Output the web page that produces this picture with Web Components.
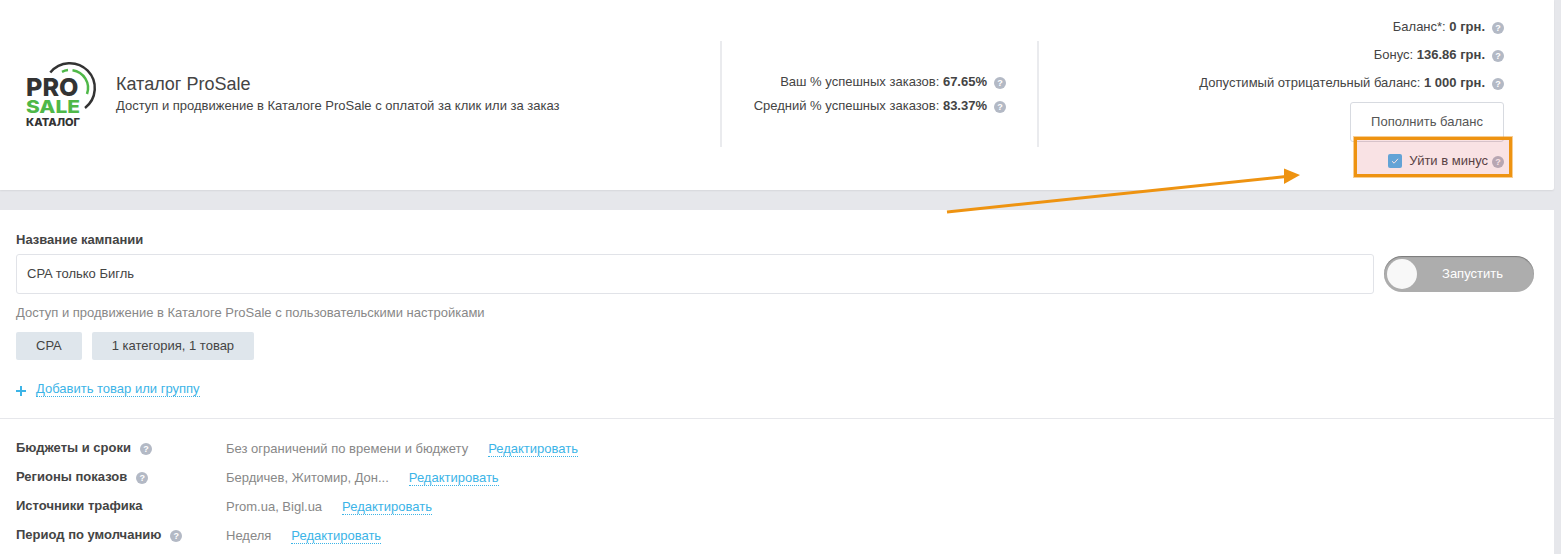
<!DOCTYPE html>
<html lang="ru">
<head>
<meta charset="utf-8">
<title>Каталог ProSale</title>
<style>
    html, body { margin: 0; height: 554px; overflow: hidden; background: #e6e7eb; }
    body { font: 13px/16px "Liberation Sans", Arial, sans-serif; color: #444; }
</style>
</head>
<body>
<campaign-page></campaign-page>

<script>
class HelpIcon extends HTMLElement {
    constructor() {
        super();
        this.attachShadow({ mode: 'open' });
        this.shadowRoot.innerHTML = `
            <style>
                :host {
                    display: inline-flex;
                    align-items: center;
                    justify-content: center;
                    width: 12px;
                    height: 12px;
                    border-radius: 50%;
                    background: #b3b9c5;
                    color: #fff;
                    font: bold 9px/12px "Liberation Sans", Arial, sans-serif;
                    flex: none;
                }
            </style>?`;
    }
}
customElements.define('help-icon', HelpIcon);

class StatLine extends HTMLElement {
    constructor() {
        super();
        this.attachShadow({ mode: 'open' });
        this.shadowRoot.innerHTML = `
            <style>
                :host {
                    display: flex;
                    justify-content: flex-end;
                    align-items: center;
                    gap: 7px;
                    height: 28px;
                    white-space: nowrap;
                }
                help-icon { position: relative; top: 1px; }
            </style>
            <span><slot></slot></span>
            <help-icon></help-icon>`;
    }
}
customElements.define('stat-line', StatLine);

class ProLogo extends HTMLElement {
    constructor() {
        super();
        this.attachShadow({ mode: 'open' });
        this.shadowRoot.innerHTML = `
            <style>
                :host { display: block; width: 74px; height: 66px; flex: none; }
                svg { display: block; overflow: visible; }
                text { font-family: Inter, "Liberation Sans", sans-serif; font-weight: 800; }
            </style>
            <svg width="74" height="66" viewBox="0 -1 74 66">
                <path d="M24.300 11.500A25 25 0 1 1 59 47" fill="none" stroke="#333" stroke-width="2.500"/>
                <path d="M36 10.900A18 18 0 0 1 42 9.100" fill="none" stroke="#4fb848" stroke-width="2.500"/>
                <path d="M46.500 9.200A18 18 0 0 1 61 33" fill="none" stroke="#4fb848" stroke-width="2.500"/>
                <text x="0" y="34.500" font-size="25" fill="#333" textLength="52.500" lengthAdjust="spacingAndGlyphs">PRO</text>
                <text x="0" y="51.500" font-size="17.500" fill="#4fb848" textLength="54" lengthAdjust="spacingAndGlyphs">SALE</text>
                <text x="0" y="65" font-size="11" fill="#333" textLength="54" lengthAdjust="spacingAndGlyphs">КАТАЛОГ</text>
            </svg>`;
    }
}
customElements.define('pro-logo', ProLogo);

class BalanceButton extends HTMLElement {
    constructor() {
        super();
        this.attachShadow({ mode: 'open' });
        this.shadowRoot.innerHTML = `
            <style>
                :host {
                    display: flex;
                    align-items: center;
                    justify-content: center;
                    box-sizing: border-box;
                    width: 154px;
                    height: 40px;
                    border: 1px solid #d7dae0;
                    border-radius: 3px;
                    background: #fff;
                    color: #555;
                }
            </style><slot></slot>`;
    }
}
customElements.define('balance-button', BalanceButton);

class MinusCheck extends HTMLElement {
    constructor() {
        super();
        this.attachShadow({ mode: 'open' });
        this.shadowRoot.innerHTML = `
            <style>
                :host {
                    display: flex;
                    justify-content: flex-end;
                    align-items: center;
                    height: 38px;
                    white-space: nowrap;
                }
                .box {
                    display: flex;
                    align-items: center;
                    justify-content: center;
                    width: 14px;
                    height: 14px;
                    border-radius: 2px;
                    background: #4fb6ef;
                    margin-right: 7px;
                }
                help-icon { margin-left: 4px; position: relative; top: 1px; }
            </style>
            <span class="box">
                <svg width="8" height="8" viewBox="0 0 8 8"><path d="M1 4.200L3.100 6.200L7 1.800" fill="none" stroke="#fff" stroke-width="1"/></svg>
            </span>
            <span><slot></slot></span>
            <help-icon></help-icon>`;
    }
}
customElements.define('minus-check', MinusCheck);

class SummaryCard extends HTMLElement {
    constructor() {
        super();
        this.attachShadow({ mode: 'open' });
        this.shadowRoot.innerHTML = `
            <style>
                :host {
                    display: flex;
                    align-items: flex-start;
                    box-sizing: border-box;
                    height: 190px;
                    background: #fff;
                    box-shadow: 0 1px 2px rgba(0, 0, 0, .07);
                    border-bottom-right-radius: 2px;
                }
                .brand {
                    box-sizing: border-box;
                    width: 720px;
                    display: flex;
                    align-items: center;
                    height: 66px;
                    margin-top: 60px;
                    padding-left: 26px;
                }
                .brand-text { margin-left: 16px; }
                h1 {
                    margin: 0 0 3px;
                    font-size: 18px;
                    line-height: 22px;
                    font-weight: normal;
                    color: #444;
                }
                .stats {
                    box-sizing: border-box;
                    width: 319px;
                    height: 106px;
                    margin-top: 41px;
                    border-left: 2px solid #eaebee;
                    border-right: 2px solid #eaebee;
                    padding: 29px 31px 0 0;
                }
                .stats stat-line { height: 24px; }
                .balance {
                    width: 465px;
                    padding-top: 13px;
                }
                .actions { width: 154px; margin: 5px 0 0 auto; }
                b { font-weight: bold; }
            </style>
            <div class="brand">
                <pro-logo></pro-logo>
                <div class="brand-text">
                    <h1>Каталог ProSale</h1>
                    <div>Доступ и продвижение в Каталоге ProSale с оплатой за клик или за заказ</div>
                </div>
            </div>
            <div class="stats">
                <stat-line>Ваш % успешных заказов: <b>67.65%</b></stat-line>
                <stat-line>Средний % успешных заказов: <b>83.37%</b></stat-line>
            </div>
            <div class="balance">
                <stat-line>Баланс*: <b>0 грн.</b></stat-line>
                <stat-line>Бонус: <b>136.86 грн.</b></stat-line>
                <stat-line>Допустимый отрицательный баланс: <b>1 000 грн.</b></stat-line>
                <div class="actions">
                    <balance-button>Пополнить баланс</balance-button>
                    <minus-check>Уйти в минус</minus-check>
                </div>
            </div>`;
    }
}
customElements.define('summary-card', SummaryCard);

class RunToggle extends HTMLElement {
    constructor() {
        super();
        this.attachShadow({ mode: 'open' });
        this.shadowRoot.innerHTML = `
            <style>
                :host {
                    display: flex;
                    align-items: center;
                    box-sizing: border-box;
                    width: 150px;
                    height: 36px;
                    padding: 0 3px;
                    border-radius: 18px;
                    background: #adadad;
                    box-shadow: inset 0 1px 1px rgba(0, 0, 0, .3);
                    color: #fff;
                    flex: none;
                }
                .knob {
                    width: 30px;
                    height: 30px;
                    border-radius: 50%;
                    background: #f8f8f8;
                    flex: none;
                }
                .label { flex: 1; text-align: center; padding-right: 3px; }
            </style>
            <span class="knob"></span>
            <span class="label"><slot></slot></span>`;
    }
}
customElements.define('run-toggle', RunToggle);

class TagChip extends HTMLElement {
    constructor() {
        super();
        this.attachShadow({ mode: 'open' });
        this.shadowRoot.innerHTML = `
            <style>
                :host {
                    display: flex;
                    align-items: center;
                    height: 28px;
                    padding: 0 20px;
                    border-radius: 2px;
                    background: #dfe6ec;
                    color: #444;
                }
            </style><slot></slot>`;
    }
}
customElements.define('tag-chip', TagChip);

class DotLink extends HTMLElement {
    constructor() {
        super();
        this.attachShadow({ mode: 'open' });
        this.shadowRoot.innerHTML = `
            <style>
                :host {
                    display: inline-block;
                    color: #3cb4e7;
                    line-height: 15px;
                    border-bottom: 1px dotted #3cb4e7;
                    white-space: nowrap;
                }
            </style><slot></slot>`;
    }
}
customElements.define('dot-link', DotLink);

class SettingRow extends HTMLElement {
    constructor() {
        super();
        this.attachShadow({ mode: 'open' });
        const help = this.hasAttribute('help') ? '<help-icon></help-icon>' : '';
        this.shadowRoot.innerHTML = `
            <style>
                :host {
                    display: flex;
                    align-items: center;
                    height: 29px;
                    white-space: nowrap;
                }
                .name {
                    display: flex;
                    align-items: center;
                    gap: 9px;
                    width: 210px;
                    font-weight: bold;
                    color: #444;
                    position: relative;
                    top: -1px;
                }
                .name help-icon { position: relative; top: 1px; }
                .value { color: #888; margin-right: 20px; }
            </style>
            <div class="name"><span>${this.getAttribute('name')}</span>${help}</div>
            <span class="value"><slot></slot></span>
            <dot-link>Редактировать</dot-link>`;
    }
}
customElements.define('setting-row', SettingRow);

class CampaignForm extends HTMLElement {
    constructor() {
        super();
        this.attachShadow({ mode: 'open' });
        this.shadowRoot.innerHTML = `
            <style>
                :host {
                    display: block;
                    margin-top: 20px;
                    height: 344px;
                    background: #fff;
                }
                .top { padding: 22px 20px 0 16px; }
                label { display: block; font-weight: bold; color: #444; margin-bottom: 6px; }
                .name-row { display: flex; align-items: center; gap: 10px; }
                .field {
                    flex: 1;
                    box-sizing: border-box;
                    height: 40px;
                    padding: 0 10px;
                    display: flex;
                    align-items: center;
                    border: 1px solid #e1e3e8;
                    border-radius: 3px;
                    color: #444;
                }
                .hint { margin-top: 11px; color: #888; }
                .tags { display: flex; gap: 10px; margin-top: 11px; }
                .add { display: flex; align-items: center; margin-top: 21px; gap: 10px; height: 16px; }
                .plus { width: 10px; height: 10px; flex: none; position: relative; top: 2px; }
                hr { border: 0; border-top: 1px solid #e6e7eb; margin: 21px 0 0; }
                .settings { padding: 15px 0 0 16px; }
            </style>
            <div class="top">
                <label>Название кампании</label>
                <div class="name-row">
                    <div class="field">CPA только Бигль</div>
                    <run-toggle>Запустить</run-toggle>
                </div>
                <div class="hint">Доступ и продвижение в Каталоге ProSale с пользовательскими настройками</div>
                <div class="tags">
                    <tag-chip>CPA</tag-chip>
                    <tag-chip>1 категория, 1 товар</tag-chip>
                </div>
                <div class="add">
                    <svg class="plus" viewBox="0 0 10 10"><path d="M5 0V10M0 5H10" stroke="#3cb4e7" stroke-width="2"/></svg>
                    <dot-link>Добавить товар или группу</dot-link>
                </div>
            </div>
            <hr>
            <div class="settings">
                <setting-row name="Бюджеты и сроки" help>Без ограничений по времени и бюджету</setting-row>
                <setting-row name="Регионы показов" help>Бердичев, Житомир, Дон...</setting-row>
                <setting-row name="Источники трафика">Prom.ua, Bigl.ua</setting-row>
                <setting-row name="Период по умолчанию" help>Неделя</setting-row>
            </div>`;
    }
}
customElements.define('campaign-form', CampaignForm);

class CampaignPage extends HTMLElement {
    constructor() {
        super();
        this.attachShadow({ mode: 'open' });
        this.shadowRoot.innerHTML = `
            <style>
                :host {
                    display: block;
                    position: relative;
                    width: 1554px;
                }
                /* annotation drawn over the screenshot */
                .mark {
                    position: absolute;
                    left: 1354px;
                    top: 137px;
                    box-sizing: border-box;
                    width: 158px;
                    height: 40px;
                    border: 3px solid #ee9311;
                    box-shadow: 0 0 0 1px rgba(238, 147, 17, .45);
                    background: rgba(217, 60, 75, .15);
                }
                .arrow { position: absolute; left: 0; top: 0; pointer-events: none; }
            </style>
            <summary-card></summary-card>
            <campaign-form></campaign-form>
            <div class="mark"></div>
            <svg class="arrow" width="1554" height="230" viewBox="0 0 1554 230">
                <path d="M947 212L1286 176.500" stroke="#ee9311" stroke-width="3" fill="none"/>
                <path d="M1300 175L1284 168.500L1284 184Z" fill="#ee9311"/>
            </svg>`;
    }
}
customElements.define('campaign-page', CampaignPage);
</script>
</body>
</html>
